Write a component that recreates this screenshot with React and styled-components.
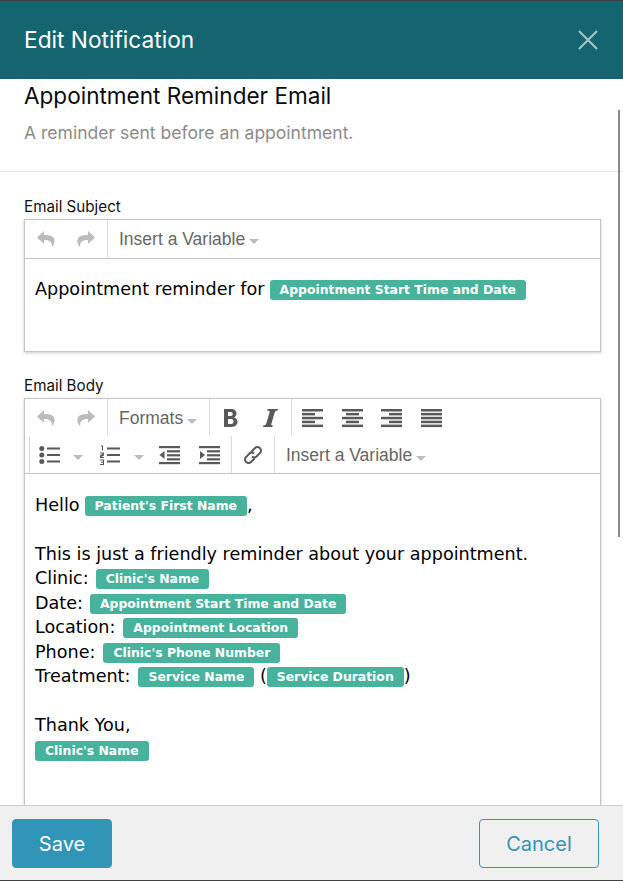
import React from "react";
import styled, { createGlobalStyle } from "styled-components";

const Global = createGlobalStyle`
  html, body { margin: 0; padding: 0; background: #fff; }
  #root { width: 623px; height: 881px; }
  * { box-sizing: border-box; }
`;

const Modal = styled.div`
  position: relative;
  width: 623px;
  height: 881px;
  display: flex;
  flex-direction: column;
  overflow: hidden;
  border-top: 1px solid #3d4247;
  border-bottom: 1px solid #3d4247;
  font-family: Inter, sans-serif;
  background: #fff;
`;
const Header = styled.header`
  flex: 0 0 78px;
  background: #156570;
  display: flex;
  align-items: center;
  justify-content: space-between;
  padding: 0 25px 0 24px;
  color: #fff;
`;
const HeaderTitle = styled.h1`
  margin: 0;
  font-size: 22.7px;
  font-weight: 400;
  line-height: 78px;
`;
const CloseIcon = styled.svg`
  width: 20px;
  height: 20px;
  stroke: #a5c6cb;
  stroke-width: 2;
  fill: none;
`;
const Body = styled.main`
  flex: 1 1 0;
  min-height: 0;
  overflow: hidden;
`;
const Intro = styled.section`
  padding: 3px 24px 0;
  height: 93px;
  border-bottom: 1px solid #e6e6e6;
`;
const IntroTitle = styled.h2`
  margin: 0;
  font-size: 22.55px;
  line-height: 28px;
  font-weight: 400;
  color: #0b0b0b;
`;
const IntroText = styled.p`
  margin: 12px 0 0;
  font-size: 17.55px;
  line-height: 22px;
  color: #8b8b8b;
`;
const Field = styled.section`
  padding: 0 22px 0 24px;
  margin-top: ${(p) => p.$top}px;
`;
const Label = styled.label`
  display: block;
  font-size: 15.2px;
  line-height: 20px;
  margin-bottom: 2px;
  color: #111;
`;
const Editor = styled.div`
  border: 1px solid #c5c5c5;
  box-shadow: 0 1px 3px rgba(0,0,0,.2);
  background: #fff;
`;
const Toolbar = styled.div`
  border-bottom: 1px solid #c5c5c5;
`;
const ToolRow = styled.div`
  display: flex;
  height: ${(p) => p.$h}px;
  padding-left: ${(p) => p.$indent || 0}px;
`;
const Group = styled.div`
  display: flex;
  align-items: center;
  flex: ${(p) => (p.$w ? `0 0 ${p.$w}px` : "0 0 auto")};
  border-left: ${(p) => (p.$first ? "0" : "1px solid #d9d9d9")};
  padding: ${(p) => p.$pad || "0"};
  gap: ${(p) => p.$gap || 0}px;
  color: #595959;
`;
const IconSlot = styled.span`
  display: inline-flex;
  align-items: center;
  justify-content: center;
  flex: 0 0 40px;
  height: 24px;
  margin-left: ${(p) => p.$ml || 0}px;
  color: ${(p) => (p.$off ? "#bcbcbc" : "#595959")};
`;
const Glyph = styled.svg`
  display: block;
  width: ${(p) => p.$s || 20}px;
  height: 20px;
  fill: currentColor;
`;
const MenuText = styled.span`
  display: inline-flex;
  align-items: center;
  gap: 4px;
  font-family: "Liberation Sans", Arial, sans-serif;
  font-size: 17.5px;
  color: #666;
`;
const Caret = styled.i`
  display: inline-block;
  flex: none;
  width: 0;
  height: 0;
  margin-top: 5px;
  margin-left: ${(p) => p.$ml || 0}px;
  border-left: 5px solid transparent;
  border-right: 5px solid transparent;
  border-top: 5px solid #b8bcc0;
`;
const Content = styled.div`
  font-family: "DejaVu Sans", Verdana, sans-serif;
  font-size: 17.6px;
  color: #000;
  padding: ${(p) => p.$pad};
  min-height: ${(p) => p.$min}px;
`;
const Line = styled.div`
  height: 24.5px;
  display: flex;
  align-items: center;
  white-space: pre;
`;
const Pill = styled.span`
  display: inline-block;
  height: 20px;
  line-height: 20px;
  padding: 0 10px;
  margin-left: ${(p) => p.$ml ?? 5}px;
  margin-top: 2px;
  border-radius: 3px;
  background: #47b39c;
  color: #fff;
  font-size: 12.4px;
  font-weight: 700;
`;
const Footer = styled.footer`
  flex: 0 0 75px;
  background: #f0f0f0;
  border-top: 1px solid #cfcfcf;
  display: flex;
  justify-content: space-between;
  align-items: flex-start;
  padding: 13px 24px 0 12px;
`;
const Button = styled.button`
  width: ${(p) => p.$w}px;
  height: 49px;
  border-radius: 4px;
  font: 400 20px Inter, sans-serif;
  border: 1px solid #3195b7;
  background: ${(p) => (p.$primary ? "#3195b7" : "transparent")};
  color: ${(p) => (p.$primary ? "#fff" : "#3195b7")};
`;
const Scrollbar = styled.div`
  position: absolute;
  right: 3px;
  top: 109px;
  width: 2px;
  height: 427px;
  background: #8a8a8a;
`;

const Undo = () => (<Glyph viewBox="0 0 20 20"><path d="M8 2 1 8.500 8 15v-4c4-.4 6.500 1 7.500 3.500.4 1 .5 2.500 0 4 3-2.500 3.800-6 2.600-9C17 6.800 13 5.500 8 6z"/></Glyph>);
const Redo = () => (<Glyph viewBox="0 0 20 20"><path d="M12 2l7 6.500L12 15v-4c-4-.4-6.500 1-7.500 3.500-.4 1-.5 2.500 0 4-3-2.500-3.800-6-2.600-9C3 6.800 7 5.500 12 6z"/></Glyph>);
const Bold = () => (<Glyph viewBox="0 0 15 20" $s={15}><path fillRule="evenodd" d="M1 1h7c3.800 0 5.500 1.800 5.500 4.500 0 2-1 3.300-2.500 3.900 2.200.5 3.500 2.100 3.500 4.400 0 3.300-2.300 5.200-6 5.200H1zm4 3v4h2.500c1.500 0 2.200-.7 2.200-2s-.7-2-2.200-2zm0 7v5h2.900c1.700 0 2.600-.8 2.600-2.500S9.600 11 7.900 11z"/></Glyph>);
const Italic = () => (<Glyph viewBox="0 0 15 20" $s={15}><path d="M4.500 1H15l-.4 1.500c-1.800.2-2.400.5-2.800 1.600L8.300 16c-.3 1 .2 1.300 1.500 1.500L9.400 19H0l.4-1.500c1.800-.2 2.400-.6 2.800-1.700L6.600 4.200C7 3 6.200 2.700 4.200 2.500z"/></Glyph>);
const rows = (spec) => spec.map(([x, w], i) => <rect key={i} x={x} y={1 + i * 3.900} width={w} height="2.500" />);
const AlignL = () => (<Glyph viewBox="0 0 22 20" $s={22}>{rows([[0,21],[0,13],[0,21],[0,13],[0,21]])}</Glyph>);
const AlignC = () => (<Glyph viewBox="0 0 22 20" $s={22}>{rows([[0,21],[4,13],[0,21],[4,13],[0,21]])}</Glyph>);
const AlignR = () => (<Glyph viewBox="0 0 22 20" $s={22}>{rows([[0,21],[8,13],[0,21],[8,13],[0,21]])}</Glyph>);
const AlignJ = () => (<Glyph viewBox="0 0 22 20" $s={22}>{rows([[0,21],[0,21],[0,21],[0,21],[0,21]])}</Glyph>);
const Bullets = () => (<Glyph viewBox="0 0 22 20" $s={22}><circle cx="2.800" cy="3.500" r="2.500"/><circle cx="2.800" cy="10" r="2.500"/><circle cx="2.800" cy="16.500" r="2.500"/><rect x="8" y="2.500" width="13" height="2"/><rect x="8" y="9" width="13" height="2"/><rect x="8" y="15.500" width="13" height="2"/></Glyph>);
const Numbers = () => (<Glyph viewBox="0 0 22 20" $s={22}><path d="M2 .5h2v5H3V1.500H2zM1 7.500h4V10.500L2.200 12H5v1H1v-2.800L3.800 8.800V8.500H1zM1 14.500h4v5.500H1v-1h3v-1.300H2v-1h2v-1.200H1z"/><rect x="8" y="2.500" width="13" height="2"/><rect x="8" y="9" width="13" height="2"/><rect x="8" y="15.500" width="13" height="2"/></Glyph>);
const Outdent = () => (<Glyph viewBox="0 0 22 20" $s={22}><rect x="0" y="1" width="21" height="2.200"/><rect x="8" y="5.200" width="13" height="2.200"/><rect x="8" y="9.200" width="13" height="2.200"/><rect x="8" y="13.200" width="13" height="2.200"/><rect x="0" y="17" width="21" height="2.200"/><path d="M5.500 6v8L0.500 10z"/></Glyph>);
const Indent = () => (<Glyph viewBox="0 0 22 20" $s={22}><rect x="0" y="1" width="21" height="2.200"/><rect x="8" y="5.200" width="13" height="2.200"/><rect x="8" y="9.200" width="13" height="2.200"/><rect x="8" y="13.200" width="13" height="2.200"/><rect x="0" y="17" width="21" height="2.200"/><path d="M1 6v8l5-4z"/></Glyph>);
const LinkIcon = () => (
  <svg width="22" height="22" viewBox="0 0 22 22" fill="none" stroke="#595959" strokeWidth="2">
    <path d="M9.500 7.500 13 4a3.200 3.200 0 0 1 4.800 0l.2.200a3.200 3.200 0 0 1 0 4.700L14.500 12.500a3.200 3.200 0 0 1-4.500 0"/>
    <path d="M12.500 14.500 9 18a3.200 3.200 0 0 1-4.800 0L4 17.800a3.200 3.200 0 0 1 0-4.700L7.500 9.500a3.200 3.200 0 0 1 4.500 0"/>
  </svg>
);

export default function App() {
  return (
    <Modal>
      <Global />
      <Header>
        <HeaderTitle>Edit Notification</HeaderTitle>
        <CloseIcon viewBox="0 0 20 20"><path d="M1 1l18 18M19 1 1 19" /></CloseIcon>
      </Header>
      <Body>
        <Intro>
          <IntroTitle>Appointment Reminder Email</IntroTitle>
          <IntroText>A reminder sent before an appointment.</IntroText>
        </Intro>
        <Field $top={25}>
          <Label>Email Subject</Label>
          <Editor>
            <Toolbar>
              <ToolRow $h={38}>
                <Group $first $pad="0 1px"><IconSlot $off><Undo /></IconSlot><IconSlot $off><Redo /></IconSlot></Group>
                <Group $pad="0 11px"><MenuText>Insert a Variable<Caret /></MenuText></Group>
              </ToolRow>
            </Toolbar>
            <Content $pad="18px 10px 0" $min={92}>
              <Line>Appointment reminder for<Pill>Appointment Start Time and Date</Pill></Line>
            </Content>
          </Editor>
        </Field>
        <Field $top={24}>
          <Label>Email Body</Label>
          <Editor>
            <Toolbar>
              <ToolRow $h={37}>
                <Group $first $pad="0 1px"><IconSlot $off><Undo /></IconSlot><IconSlot $off><Redo /></IconSlot></Group>
                <Group $pad="2px 0 0 11px" $w={102}><MenuText>Formats<Caret /></MenuText></Group>
                <Group $w={82}><IconSlot><Bold /></IconSlot><IconSlot><Italic /></IconSlot></Group>
                <Group $pad="0 0 0 10px" $gap={17.500}><AlignL /><AlignC /><AlignR /><AlignJ /></Group>
              </ToolRow>
              <ToolRow $h={37} $indent={4}>
                <Group $w={202}>
                  <IconSlot><Bullets /></IconSlot><Caret $ml={3} />
                  <IconSlot $ml={7}><Numbers /></IconSlot><Caret $ml={4} />
                  <IconSlot $ml={6}><Outdent /></IconSlot><IconSlot><Indent /></IconSlot>
                </Group>
                <Group $w={43} $pad="0 0 0 1px"><IconSlot><LinkIcon /></IconSlot></Group>
                <Group $pad="2px 11px 0"><MenuText>Insert a Variable<Caret /></MenuText></Group>
              </ToolRow>
            </Toolbar>
            <Content $pad="18.5px 10px 0" $min={400}>
              <Line>Hello<Pill>Patient's First Name</Pill>,</Line>
              <Line />
              <Line>This is just a friendly reminder about your appointment.</Line>
              <Line>Clinic:<Pill $ml={7}>Clinic's Name</Pill></Line>
              <Line>Date:<Pill $ml={7}>Appointment Start Time and Date</Pill></Line>
              <Line>Location:<Pill $ml={8}>Appointment Location</Pill></Line>
              <Line>Phone:<Pill $ml={8}>Clinic's Phone Number</Pill></Line>
              <Line>Treatment:<Pill $ml={8}>Service Name</Pill> (<Pill $ml={0}>Service Duration</Pill>)</Line>
              <Line />
              <Line>Thank You,</Line>
              <Line><Pill $ml={0}>Clinic's Name</Pill></Line>
            </Content>
          </Editor>
        </Field>
      </Body>
      <Footer>
        <Button $primary $w={100}>Save</Button>
        <Button $w={120}>Cancel</Button>
      </Footer>
      <Scrollbar />
    </Modal>
  );
}
